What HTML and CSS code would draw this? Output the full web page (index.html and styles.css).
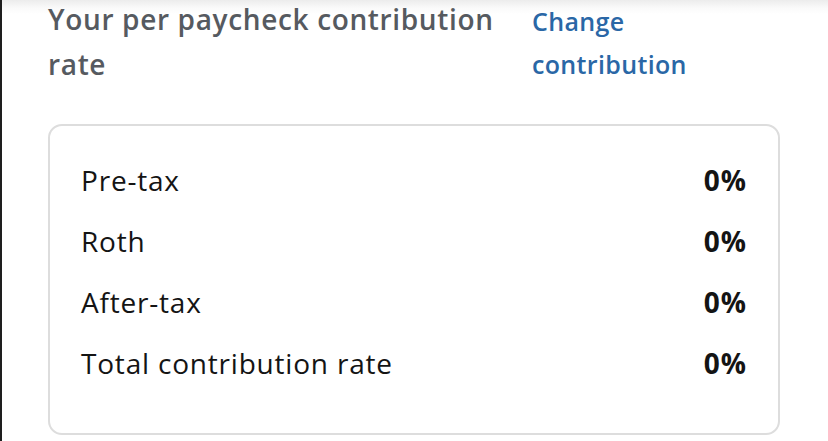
FILE: index.html
```html
<!DOCTYPE html>
<html>
<head>
<meta charset="utf-8">
<link rel="stylesheet" href="styles.css">
</head>
<body>
<div class="page">
  <div class="header">
    <h2 class="title">Your per paycheck contribution rate</h2>
    <a class="link" href="#">Change contribution</a>
  </div>
  <div class="card">
    <div class="row"><span class="label">Pre-tax</span><span class="value">0%</span></div>
    <div class="row"><span class="label">Roth</span><span class="value">0%</span></div>
    <div class="row"><span class="label">After-tax</span><span class="value">0%</span></div>
    <div class="row"><span class="label">Total contribution rate</span><span class="value">0%</span></div>
  </div>
</div>
</body>
</html>
```
FILE: styles.css
```css
html, body {
  margin: 0;
  padding: 0;
  background: #fff;
}
body {
  font-family: "Open Sans", "Noto Sans", sans-serif;
}
.page {
  width: 828px;
  height: 441px;
  box-sizing: border-box;
  border-left: 2px solid #1e1e1e;
  background: linear-gradient(#ececec 0px, #fafafa 8px, #fff 14px);
  padding: 0 46px 0 46px;
  overflow: hidden;
}
.header {
  display: flex;
  align-items: flex-start;
}
.title {
  margin: 0;
  width: 484px;
  padding-right: 10px;
  box-sizing: border-box;
  font-size: 28px;
  line-height: 45px;
  letter-spacing: 0.65px;
  font-weight: 600;
  color: #565a60;
  margin-top: -3px;
}
.link {
  width: 170px;
  font-size: 25px;
  line-height: 43px;
  letter-spacing: 0.35px;
  font-weight: 600;
  color: #2a67a6;
  text-decoration: none;
}
.card {
  margin-top: 37px;
  width: 732px;
  box-sizing: border-box;
  border: 2px solid #dddddd;
  border-radius: 14px;
  padding: 24px 31px 39px 31px;
}
.row {
  display: flex;
  justify-content: space-between;
  height: 61px;
  line-height: 61px;
  font-size: 28px;
  letter-spacing: 0.8px;
  color: #141414;
}
.value {
  font-weight: 700;
  letter-spacing: 1px;
}
```
